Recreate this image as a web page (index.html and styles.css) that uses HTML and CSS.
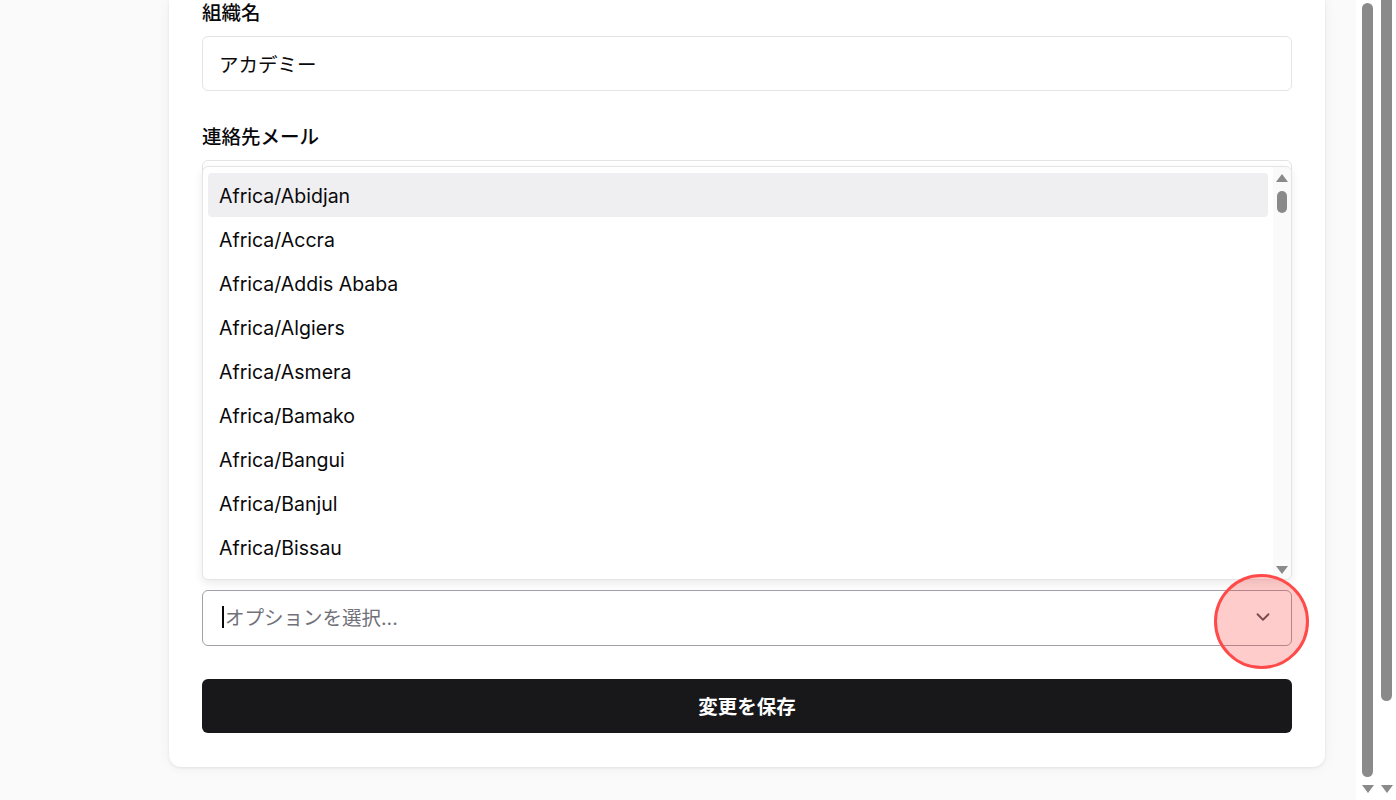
FILE: index.html
```html
<!DOCTYPE html>
<html lang="ja">
<head>
  <meta charset="UTF-8" />
  <title>組織設定</title>
  <link rel="stylesheet" href="styles.css">
</head>
<body>

  <div class="page">
    <div class="card">

      <div class="field">
        <label>組織名</label>
        <div class="input">アカデミー</div>
      </div>

      <div class="field">
        <label>連絡先メール</label>
        <div class="input"></div>
      </div>

      <!-- covered by the open dropdown -->
      <div class="field">
        <div class="input textarea"></div>
      </div>

      <div class="field">
        <div class="combo" aria-label="タイムゾーン">
          <div class="select">
            <span class="caret"></span>
            <span class="placeholder">オプションを選択...</span>
            <svg class="chevron" width="22" height="22" viewBox="0 0 24 24" fill="none" stroke="currentColor" stroke-width="2" stroke-linecap="round" stroke-linejoin="round"><path d="m6 9 6 6 6-6"/></svg>
          </div>

          <div class="dropdown">
            <div class="options">
              <div class="option active">Africa/Abidjan</div>
              <div class="option">Africa/Accra</div>
              <div class="option">Africa/Addis Ababa</div>
              <div class="option">Africa/Algiers</div>
              <div class="option">Africa/Asmera</div>
              <div class="option">Africa/Bamako</div>
              <div class="option">Africa/Bangui</div>
              <div class="option">Africa/Banjul</div>
              <div class="option">Africa/Bissau</div>
            </div>
            <div class="mini-scroll">
              <span class="arrow-up"></span>
              <span class="mini-thumb"></span>
              <span class="grow"></span>
              <span class="arrow-down"></span>
            </div>
          </div>

          <div class="click-mark"></div>
        </div>
      </div>

      <button class="save">変更を保存</button>
    </div>
  </div>

  <div class="rail">
    <div class="track">
      <span class="thumb long"></span>
      <span class="grow"></span>
      <span class="arrow-down"></span>
    </div>
    <div class="track">
      <span class="thumb short"></span>
      <span class="grow"></span>
      <span class="arrow-down"></span>
    </div>
  </div>

</body>
</html>
```

FILE: styles.css
```css
body {
  margin: 0;
  height: 800px;
  overflow: hidden;
  display: flex;
  font-family: Inter, "Noto Sans CJK JP", sans-serif;
  font-size: 19.5px;
  color: #09090b;
  background: #ffffff;
}

.page {
  flex: 1;
  background: #fafafa;
  padding-left: 169px;
}

.card {
  width: 1156px;
  box-sizing: border-box;
  background: white;
  padding: 0 33px 34px;
  border-radius: 0 0 12px 12px;
  box-shadow: 0 1px 3px rgba(0,0,0,0.08), 0 0 14px rgba(0,0,0,0.05);
}

.field {
  margin-bottom: 33px;
}

label {
  display: block;
  font-size: 19.5px;
  line-height: 27px;
  font-weight: 500;
  margin-bottom: 9px;
}

.input {
  height: 55px;
  box-sizing: border-box;
  border: 1px solid #e4e4e7;
  border-radius: 6px;
  padding: 0 16px;
  display: flex;
  align-items: center;
}

.textarea {
  height: 309px;
}

.combo {
  position: relative;
}

.select {
  height: 56px;
  box-sizing: border-box;
  border: 1px solid #a1a1aa;
  border-radius: 6px;
  padding: 0 17px 3px 19px;
  display: flex;
  align-items: center;
}

.caret {
  width: 2px;
  height: 22px;
  background: #09090b;
  margin-right: 1px;
}

.placeholder {
  flex: 1;
  color: #71717a;
}

.chevron {
  color: #52525b;
}

.dropdown {
  position: absolute;
  left: 0;
  right: 0;
  bottom: calc(100% + 10px);
  height: 414px;
  box-sizing: border-box;
  background: white;
  border: 1px solid #e4e4e7;
  border-radius: 6px;
  box-shadow: 0 4px 10px rgba(0,0,0,0.08);
  display: flex;
  overflow: hidden;
}

.options {
  flex: 1;
  padding: 6px 5px 0 5px;
  overflow: hidden;
}

.option {
  height: 44px;
  display: flex;
  align-items: center;
  padding-left: 11px;
  padding-top: 1px;
  box-sizing: border-box;
  border-radius: 4px;
}

.option.active {
  background: #efeff1;
}

.mini-scroll {
  width: 18px;
  background: #fafafa;
  display: flex;
  flex-direction: column;
  align-items: center;
  padding: 7px 0 5px;
}

.mini-thumb {
  width: 10px;
  height: 22px;
  border-radius: 5px;
  background: #8a8a8a;
  margin-top: 9px;
}

.grow {
  flex: 1;
}

.arrow-up {
  width: 0;
  height: 0;
  border-left: 6px solid transparent;
  border-right: 6px solid transparent;
  border-bottom: 8px solid #8a8a8a;
}

.arrow-down {
  width: 0;
  height: 0;
  border-left: 6px solid transparent;
  border-right: 6px solid transparent;
  border-top: 8px solid #8a8a8a;
}

.click-mark {
  position: absolute;
  right: -17px;
  top: -16px;
  width: 89px;
  height: 89px;
  border-radius: 50%;
  border: 3px solid #ff4a4a;
  background: rgba(255, 40, 40, 0.24);
}

.save {
  display: block;
  width: 100%;
  height: 54px;
  border: none;
  border-radius: 6px;
  background: #18181b;
  color: white;
  font-family: inherit;
  font-size: 19.5px;
  font-weight: 600;
  padding-bottom: 2px;
}

.rail {
  width: 40px;
  display: flex;
  gap: 8px;
  padding-left: 6px;
  box-sizing: border-box;
}

.track {
  width: 11px;
  display: flex;
  flex-direction: column;
  align-items: center;
  padding-bottom: 7px;
}

.thumb {
  width: 11px;
  background: #8a8a8a;
}

.thumb.long {
  margin-top: 3px;
  height: 774px;
  border-radius: 6px;
}

.thumb.short {
  height: 701px;
  border-radius: 0 0 6px 6px;
}
```
